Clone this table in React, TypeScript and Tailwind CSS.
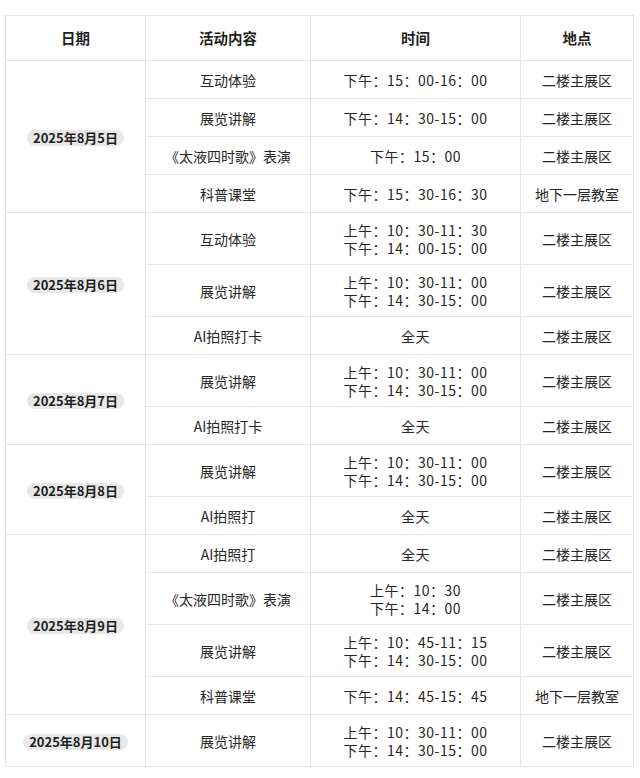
const font = { fontFamily: '"Noto Sans CJK SC", "Noto Sans", sans-serif' }

type Item = { name: string; time: string[]; place: string }
type Day = { date: string; items: Item[] }

const A = '二楼主展区'
const B = '地下一层教室'

const days: Day[] = [
  {
    date: '2025年8月5日',
    items: [
      { name: '互动体验', time: ['下午：15：00-16：00'], place: A },
      { name: '展览讲解', time: ['下午：14：30-15：00'], place: A },
      { name: '《太液四时歌》表演', time: ['下午：15：00'], place: A },
      { name: '科普课堂', time: ['下午：15：30-16：30'], place: B },
    ],
  },
  {
    date: '2025年8月6日',
    items: [
      { name: '互动体验', time: ['上午：10：30-11：30', '下午：14：00-15：00'], place: A },
      { name: '展览讲解', time: ['上午：10：30-11：00', '下午：14：30-15：00'], place: A },
      { name: 'AI拍照打卡', time: ['全天'], place: A },
    ],
  },
  {
    date: '2025年8月7日',
    items: [
      { name: '展览讲解', time: ['上午：10：30-11：00', '下午：14：30-15：00'], place: A },
      { name: 'AI拍照打卡', time: ['全天'], place: A },
    ],
  },
  {
    date: '2025年8月8日',
    items: [
      { name: '展览讲解', time: ['上午：10：30-11：00', '下午：14：30-15：00'], place: A },
      { name: 'AI拍照打', time: ['全天'], place: A },
    ],
  },
  {
    date: '2025年8月9日',
    items: [
      { name: 'AI拍照打', time: ['全天'], place: A },
      { name: '《太液四时歌》表演', time: ['上午：10：30', '下午：14：00'], place: A },
      { name: '展览讲解', time: ['上午：10：45-11：15', '下午：14：30-15：00'], place: A },
      { name: '科普课堂', time: ['下午：14：45-15：45'], place: B },
    ],
  },
  {
    date: '2025年8月10日',
    items: [
      { name: '展览讲解', time: ['上午：10：30-11：00', '下午：14：30-15：00'], place: A },
    ],
  },
]

const cell = 'border border-[#e6e6e6] text-center align-middle p-0'

export default function App() {
  return (
    <div className="w-[640px] h-[778px] bg-white overflow-hidden pt-[15px] pl-[5px]" style={font}>
      <table className="border-collapse table-fixed w-[628px] text-[14px] text-[#262626] leading-[18px]">
        <colgroup>
          <col className="w-[140px]" />
          <col className="w-[165px]" />
          <col className="w-[210px]" />
          <col className="w-[113px]" />
        </colgroup>
        <thead>
          <tr className="h-[45px]">
            {['日期', '活动内容', '时间', '地点'].map((h) => (
              <th key={h} className={`${cell} font-bold text-[14.5px] text-[#1f1f1f]`}>
                {h}
              </th>
            ))}
          </tr>
        </thead>
        <tbody>
          {days.map((d) =>
            d.items.map((it, i) => (
              <tr key={d.date + i} className={it.time.length > 1 ? 'h-[52px]' : 'h-[38px]'}>
                {i === 0 && (
                  <td rowSpan={d.items.length} className={cell}>
                    <span className="inline-block rounded-full bg-[#e8e8e8] px-[6px] text-[13px] leading-[16px] font-bold text-[#1f1f1f]">
                      {d.date}
                    </span>
                  </td>
                )}
                <td className={cell}>{it.name}</td>
                <td className={`${cell} tracking-[0.5px]`}>
                  {it.time.map((t) => (
                    <div key={t}>{t}</div>
                  ))}
                </td>
                <td className={cell}>{it.place}</td>
              </tr>
            ))
          )}
        </tbody>
      </table>
    </div>
  )
}
